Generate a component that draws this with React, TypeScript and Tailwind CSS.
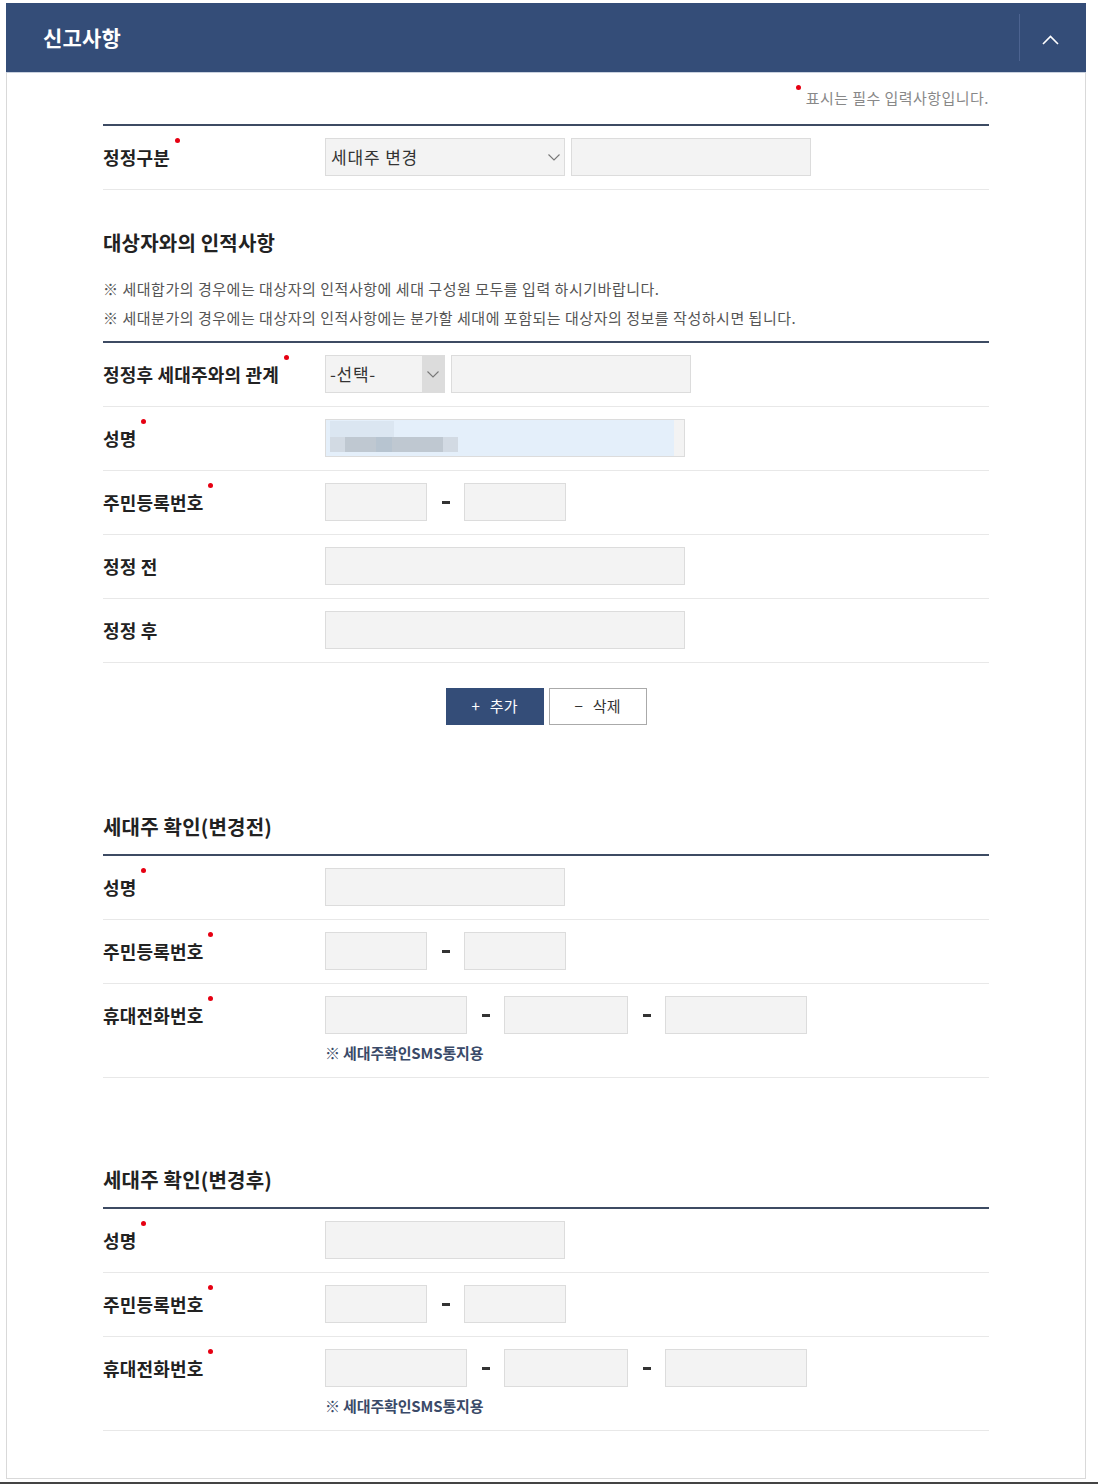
import React from 'react';

const Dot = () => (
  <span className="absolute left-[calc(100%+5px)] top-[-6px] w-[5px] h-[5px] rounded-full bg-[#e60012]"></span>
);

const Label = ({ text, required }: { text: string; required?: boolean }) => (
  <div className="h-[38px] flex items-center">
    <span className="relative text-[18px] leading-[26px] font-bold text-[#222] tracking-[0.01em]">
      {text}
      {required && <Dot />}
    </span>
  </div>
);

const Box = ({ className = '' }: { className?: string }) => (
  <div className={`h-[38px] border border-[#dcdcdc] bg-[#f3f3f3] ${className}`}></div>
);

const Dash = () => (
  <div className="w-[37px] h-[38px] flex items-center justify-center">
    <span className="block w-[8px] h-[3px] bg-[#333]"></span>
  </div>
);

const ChevronDown = () => (
  <svg width="12" height="7" viewBox="0 0 12 7" fill="none">
    <polyline points="0.5,0.5 6,6 11.5,0.5" stroke="#777" strokeWidth="1.1" />
  </svg>
);

const Row = ({ label, required = true, children }: { label: string; required?: boolean; children: React.ReactNode }) => (
  <div className="flex items-start border-b border-[#e8e8e8] pt-3 pb-[13px]">
    <div className="w-[222px] shrink-0">
      <Label text={label} required={required} />
    </div>
    <div>{children}</div>
  </div>
);

const SectionTitle = ({ text, className }: { text: string; className: string }) => (
  <h3 className={`text-[20px] leading-[30px] font-bold text-[#222] tracking-[0.01em] ${className}`}>{text}</h3>
);

const ThickLine = () => <div className="h-[2px] bg-[#3d4b63]"></div>;

const JuminRow = () => (
  <Row label="주민등록번호">
    <div className="flex">
      <Box className="w-[102px]" />
      <Dash />
      <Box className="w-[102px]" />
    </div>
  </Row>
);

const PhoneRow = () => (
  <Row label="휴대전화번호">
    <div className="flex">
      <Box className="w-[142px]" />
      <Dash />
      <Box className="w-[124px]" />
      <Dash />
      <Box className="w-[142px]" />
    </div>
    <p className="mt-[8px] text-[15px] leading-[22px] font-bold text-[#3a4a68] tracking-[-0.01em]">※ 세대주확인SMS통지용</p>
  </Row>
);

const App: React.FC = () => {
  return (
    <div className="min-h-[1484px] bg-white pt-[3px] font-['Noto_Sans_CJK_KR','Noto_Sans',sans-serif]">
      <div className="ml-[6px] w-[1080px]">
        {/* header */}
        <div className="h-[70px] bg-[#344d78] flex items-center justify-between border-b border-[#c9d1de]">
          <h2 className="pl-[37px] text-[21px] font-bold text-white tracking-[0.01em]">신고사항</h2>
          <div className="flex items-center h-full">
            <div className="w-px h-[47px] bg-[#4c6390]"></div>
            <button className="w-[66px] h-full flex items-center justify-start pl-[22px]">
              <svg className="mt-[4px]" width="17" height="10" viewBox="0 0 17 10" fill="none">
                <polyline points="1,9 8.5,1.5 16,9" stroke="#fff" strokeWidth="1.6" />
              </svg>
            </button>
          </div>
        </div>

        {/* body */}
        <div className="border-x border-b border-[#d9d9d9] px-[96px] pt-[14px] pb-[47px]">
          <div className="flex justify-end">
            <p className="relative text-[15px] leading-[22px] text-[#888] tracking-[0.03em]">
              <span className="absolute left-[-10px] top-[-2px] w-[5px] h-[5px] rounded-full bg-[#e60012]"></span>
              표시는 필수 입력사항입니다.
            </p>
          </div>

          <div className="mt-[15px]">
            <ThickLine />
            <Row label="정정구분">
              <div className="flex gap-[6px]">
                <div className="w-[240px] h-[38px] border border-[#dcdcdc] bg-[#f3f3f3] flex items-center justify-between pl-[5px] pr-[4px]">
                  <span className="text-[17px] text-[#333] tracking-[0.05em]">세대주 변경</span>
                  <ChevronDown />
                </div>
                <Box className="w-[240px]" />
              </div>
            </Row>
          </div>

          {/* 대상자와의 인적사항 */}
          <SectionTitle text="대상자와의 인적사항" className="mt-[38px]" />
          <div className="mt-[16px] text-[15px] leading-[29px] text-[#555] tracking-[0.035em]">
            <p>※ 세대합가의 경우에는 대상자의 인적사항에 세대 구성원 모두를 입력 하시기바랍니다.</p>
            <p>※ 세대분가의 경우에는 대상자의 인적사항에는 분가할 세대에 포함되는 대상자의 정보를 작성하시면 됩니다.</p>
          </div>
          <div className="mt-[9px]">
            <ThickLine />
            <Row label="정정후 세대주와의 관계">
              <div className="flex gap-[6px]">
                <div className="w-[120px] h-[38px] border border-[#dcdcdc] bg-[#f3f3f3] flex">
                  <span className="flex-1 flex items-center pl-[4px] text-[17px] text-[#333] tracking-[0.04em]">-선택-</span>
                  <span className="w-[22px] h-full bg-[#dcdcdc] flex items-center justify-center">
                    <ChevronDown />
                  </span>
                </div>
                <Box className="w-[240px]" />
              </div>
            </Row>
            <Row label="성명">
              <div className="w-[360px] h-[38px] border border-[#dcdcdc] bg-[#f3f3f3] flex">
                <div className="w-[348px] h-full bg-[#e4effa] relative overflow-hidden">
                  <div className="absolute left-[4px] top-[1px] w-[64px] h-[16px] bg-[#dbe6f1]"></div>
                  <div className="absolute left-[4px] top-[17px] w-[128px] h-[15px] bg-[#d2dae3]"></div>
                  <div className="absolute left-[19px] top-[17px] w-[98px] h-[15px] bg-[#bfc8d1]"></div>
                  <div className="absolute left-[50px] top-[17px] w-[16px] h-[15px] bg-[#b7c4d0]"></div>
                </div>
              </div>
            </Row>
            <JuminRow />
            <Row label="정정 전" required={false}>
              <Box className="w-[360px]" />
            </Row>
            <Row label="정정 후" required={false}>
              <Box className="w-[360px]" />
            </Row>
          </div>

          <div className="mt-[25px] flex justify-center gap-[5px]">
            <button className="w-[98px] h-[37px] bg-[#344d78] text-white text-[15px] flex items-center justify-center gap-[10px]">
              <span>+</span>
              <span>추가</span>
            </button>
            <button className="w-[98px] h-[37px] bg-white border border-[#aaa] text-[#333] text-[15px] flex items-center justify-center gap-[10px]">
              <span>−</span>
              <span>삭제</span>
            </button>
          </div>

          {/* 세대주 확인(변경전) */}
          <SectionTitle text="세대주 확인(변경전)" className="mt-[87px]" />
          <div className="mt-[12px]">
            <ThickLine />
            <Row label="성명">
              <Box className="w-[240px]" />
            </Row>
            <JuminRow />
            <PhoneRow />
          </div>

          {/* 세대주 확인(변경후) */}
          <SectionTitle text="세대주 확인(변경후)" className="mt-[87px]" />
          <div className="mt-[12px]">
            <ThickLine />
            <Row label="성명">
              <Box className="w-[240px]" />
            </Row>
            <JuminRow />
            <PhoneRow />
          </div>
        </div>
      </div>
      <div className="mt-[3px] h-[4px] bg-[#444]"></div>
    </div>
  );
};

export default App;
